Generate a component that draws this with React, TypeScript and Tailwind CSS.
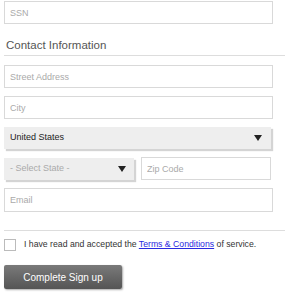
import React from "react";

const inputCls =
  "block h-[23px] border border-[#d9d9d9] bg-white px-[5px] text-[9px] text-[#333] placeholder:text-[#aaa] outline-none";

const Arrow = () => (
  <svg width="8" height="6" viewBox="0 0 8 6" className="shrink-0">
    <path d="M0 0 H8 L4 6 Z" fill="#222" />
  </svg>
);

const App = () => {
  const [agree, setAgree] = React.useState(false);
  return (
    <div className="w-[285px] h-[300px] bg-white pt-[1px] font-['Liberation_Sans',Arial,sans-serif]">
      <input className={`${inputCls} ml-[4px] w-[269px]`} placeholder="SSN" />

      <h2 className="ml-[6px] mt-[13px] text-[11.5px] leading-[16px] text-[#555]">
        Contact Information
      </h2>
      <div className="ml-[4px] mt-[2px] h-px bg-[#ddd]" />

      <div className="ml-[4px] mt-[9px] flex flex-col gap-[8px]">
        <input className={`${inputCls} w-[269px]`} placeholder="Street Address" />
        <input className={`${inputCls} w-[269px]`} placeholder="City" />
        <div className="flex h-[22px] w-[267px] items-center justify-between bg-[#eeeeee] pl-[6px] pr-[9px] text-[9px] text-[#222] shadow-[2px_2px_1px_#d4d4d4]">
          <span>United States</span>
          <Arrow />
        </div>
        <div className="flex items-center gap-[7px]">
          <div className="flex h-[22px] w-[130px] items-center justify-between bg-[#eeeeee] pl-[6px] pr-[8px] text-[9px] text-[#aaa] shadow-[2px_2px_1px_#d4d4d4]">
            <span>- Select State -</span>
            <Arrow />
          </div>
          <input className={`${inputCls} w-[130px]`} placeholder="Zip Code" />
        </div>
        <input className={`${inputCls} h-[24px] w-[269px]`} placeholder="Email" />
      </div>

      <div className="ml-[4px] mt-[18px] h-px bg-[#ddd]" />

      <label className="ml-[4px] mt-[7px] flex items-center gap-[8px] text-[8.7px] text-[#333]">
        <span
          onClick={() => setAgree(!agree)}
          className="block h-[12px] w-[12px] border border-[#bbb] bg-white"
        />
        <span>
          I have read and accepted the{" "}
          <a href="#" className="text-[#2a2ae0] underline">
            Terms &amp; Conditions
          </a>{" "}
          of service.
        </span>
      </label>

      <button className="ml-[4px] mt-[14px] block h-[24px] w-[118px] rounded-[2px] bg-gradient-to-b from-[#7a7a7a] to-[#555] text-[10px] text-white shadow-[1px_1px_2px_#aaa]">
        Complete Sign up
      </button>
    </div>
  );
};

export default App;
